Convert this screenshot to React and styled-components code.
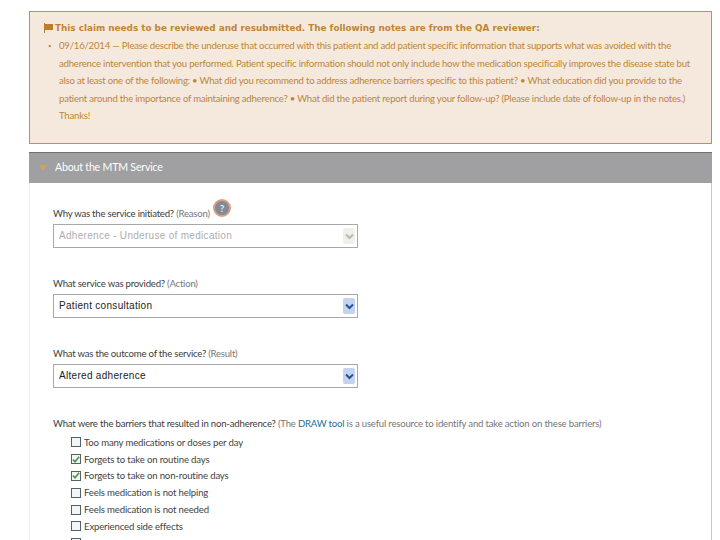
import React from "react";
import styled, { createGlobalStyle } from "styled-components";

const barriers = [
  { label: "Too many medications or doses per day", checked: false },
  { label: "Forgets to take on routine days", checked: true },
  { label: "Forgets to take on non-routine days", checked: true },
  { label: "Feels medication is not helping", checked: false },
  { label: "Feels medication is not needed", checked: false },
  { label: "Experienced side effects", checked: false },
  { label: "", checked: false },
];

const App = () => (
  <Page>
    <GlobalStyle />
    <Notice>
      <NoticeTitle>
        <svg width="11" height="10" viewBox="0 0 11 10">
          <path d="M1 0h1v10H1zM2 1h8v6H2z" fill="#b97f2e" />
        </svg>
        This claim needs to be reviewed and resubmitted. The following notes are from the QA reviewer:
      </NoticeTitle>
      <NoteList>
        <Bullet>•</Bullet>
        <NoteText>
          09/16/2014 — Please describe the underuse that occurred with this patient and add patient specific information that supports what was avoided with the
          <br />
          adherence intervention that you performed. Patient specific information should not only include how the medication specifically improves the disease state but
          <br />
          also at least one of the following: • What did you recommend to address adherence barriers specific to this patient? • What education did you provide to the
          <br />
          patient around the importance of maintaining adherence? • What did the patient report during your follow-up? (Please include date of follow-up in the notes.)
          <br />
          Thanks!
        </NoteText>
      </NoteList>
    </Notice>

    <Panel>
      <PanelHeader>
        <Caret>
          <svg width="8" height="5" viewBox="0 0 8 5">
            <path d="M0 0h8L4 5z" fill="#d9a05c" />
          </svg>
        </Caret>
        About the MTM Service
      </PanelHeader>
      <PanelBody>
        <Field>
          <Label>
            Why was the service initiated? <Hint>(Reason)</Hint>
            <HelpIcon>?</HelpIcon>
          </Label>
          <Select $disabled>
            Adherence - Underuse of medication
            <SelectArrow $disabled>
              <ArrowIcon color="#b9bcb4" />
            </SelectArrow>
          </Select>
        </Field>
        <Field>
          <Label>
            What service was provided? <Hint>(Action)</Hint>
          </Label>
          <Select>
            Patient consultation
            <SelectArrow>
              <ArrowIcon color="#2c4f96" />
            </SelectArrow>
          </Select>
        </Field>
        <Field>
          <Label>
            What was the outcome of the service? <Hint>(Result)</Hint>
          </Label>
          <Select>
            Altered adherence
            <SelectArrow>
              <ArrowIcon color="#2c4f96" />
            </SelectArrow>
          </Select>
        </Field>
        <BarrierLabel>
          What were the barriers that resulted in non-adherence? <Hint>(The <DrawLink>DRAW tool</DrawLink> is a useful resource to identify and take action on these barriers)</Hint>
        </BarrierLabel>
        <CheckList>
          {barriers.map((item, i) => (
            <CheckRow key={i}>
              <CheckBox>
                {item.checked && (
                  <svg width="9" height="9" viewBox="0 0 9 9">
                    <path d="M1 4.5l2.4 2.6L8 1.5" fill="none" stroke="#3f9a3f" strokeWidth="1.8" />
                  </svg>
                )}
              </CheckBox>
              {item.label}
            </CheckRow>
          ))}
        </CheckList>
      </PanelBody>
    </Panel>
  </Page>
);

const ArrowIcon = ({ color }) => (
  <svg width="9" height="7" viewBox="0 0 9 7">
    <path d="M1 1.5l3.5 3.5L8 1.5" fill="none" stroke={color} strokeWidth="2" />
  </svg>
);

const GlobalStyle = createGlobalStyle`
  html, body {
    margin: 0;
    height: 540px;
    overflow: hidden;
    background: #fff;
  }
`;

const Page = styled.div`
  box-sizing: border-box;
  height: 540px;
  overflow: hidden;
  padding: 11px 8px 0 29px;
  font-family: Lato, "Liberation Sans", sans-serif;
`;

const Notice = styled.section`
  box-sizing: border-box;
  height: 133px;
  padding: 8px 12px 0 13px;
  background: #f5e9de;
  border: 1px solid #bd9350;
  color: #bf8536;
`;

const NoticeTitle = styled.h2`
  display: flex;
  align-items: center;
  gap: 1px;
  margin: 0 0 1px;
  font-family: "DejaVu Sans", sans-serif;
  font-size: 8.85px;
  font-weight: 700;
  line-height: 16px;
  white-space: nowrap;
`;

const NoteList = styled.div`
  display: flex;
  padding-left: 5px;
`;

const Bullet = styled.span`
  flex: none;
  width: 11px;
  font-size: 6px;
  line-height: 17px;
`;

const NoteText = styled.p`
  margin: 0;
  font-size: 9.6px;
  letter-spacing: -0.22px;
  line-height: 17.6px;
  white-space: nowrap;
`;

const Panel = styled.section`
  margin-top: 8px;
  border-right: 1px solid #c8c8c8;
  border-left: 1px solid #eeeeee;
`;

const PanelHeader = styled.header`
  display: flex;
  align-items: center;
  box-sizing: border-box;
  height: 31px;
  margin: 0 -1px;
  padding: 0 0 2px 10px;
  background: #a0a0a2;
  border-top: 1px solid #707070;
  color: #fff;
  font-size: 10.6px;
  letter-spacing: -0.2px;
`;

const Caret = styled.span`
  display: flex;
  width: 16px;
`;

const PanelBody = styled.div`
  padding: 17px 0 0 23px;
  color: #444;
`;

const Field = styled.div`
  height: 70px;
`;

const Label = styled.div`
  position: relative;
  height: 24px;
  font-size: 9.6px;
  letter-spacing: -0.23px;
  line-height: 28px;
  color: #3c3c3c;
`;

const Hint = styled.span`
  color: #777;
`;

const HelpIcon = styled.span`
  position: absolute;
  left: 160px;
  top: -1px;
  display: flex;
  align-items: center;
  justify-content: center;
  box-sizing: border-box;
  width: 18px;
  height: 18px;
  border: 2px solid #d9a07f;
  border-radius: 50%;
  background: #808a98;
  color: #e6e8ee;
  font-size: 10px;
  font-weight: 700;
  line-height: 1;
`;

const Select = styled.div`
  display: flex;
  align-items: center;
  justify-content: space-between;
  box-sizing: border-box;
  width: 305px;
  height: 24px;
  padding: 0 2px 2px 5px;
  border: 1px solid #a8a8a8;
  background: #fff;
  color: ${(p) => (p.$disabled ? "#adadad" : "#1c1c1c")};
  font-family: "Liberation Sans", sans-serif;
  font-size: 10px;
  letter-spacing: 0.3px;
`;

const SelectArrow = styled.span`
  display: flex;
  align-items: center;
  justify-content: center;
  width: 12px;
  height: 16px;
  margin-top: 2px;
  border-radius: 2px;
  background: ${(p) => (p.$disabled ? "#f0f0ea" : "#c4d3ee")};
`;

const BarrierLabel = styled.div`
  height: 19px;
  margin-top: 4px;
  font-size: 9.6px;
  letter-spacing: -0.2px;
  line-height: 19px;
  color: #3c3c3c;
  white-space: nowrap;
`;

const DrawLink = styled.a`
  color: #1f6f8f;
`;

const CheckList = styled.div`
  display: flex;
  flex-direction: column;
  padding: 1px 0 0 18px;
`;

const CheckRow = styled.label`
  display: flex;
  align-items: center;
  gap: 3px;
  flex: none;
  height: 16.8px;
  font-size: 9.6px;
  letter-spacing: -0.16px;
  color: #444;
`;

const CheckBox = styled.span`
  display: flex;
  align-items: center;
  justify-content: center;
  box-sizing: border-box;
  width: 10px;
  height: 10px;
  border: 1px solid #54606c;
  background: #f4f5f4;
`;

export default App;
